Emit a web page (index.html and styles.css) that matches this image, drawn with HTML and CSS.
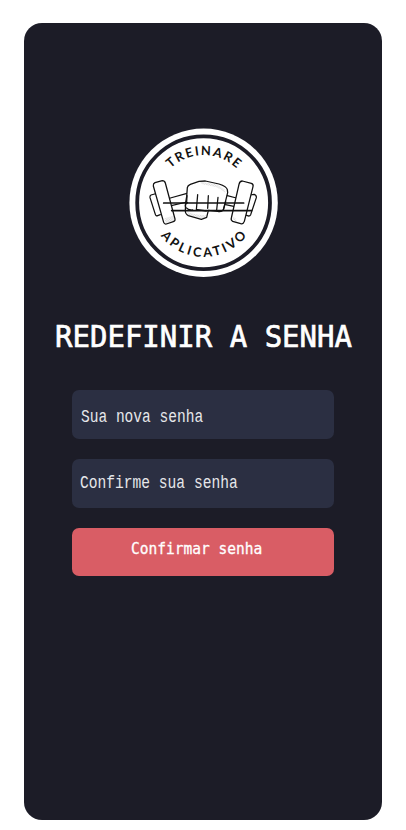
FILE: index.html
```
<!DOCTYPE html>
<html lang="pt-BR">
<head>
<meta charset="utf-8">
<title>Redefinir a senha</title>
<link rel="stylesheet" href="styles.css">
</head>
<body>
<main class="screen">
  <svg class="logo" viewBox="128 127 151 151" role="img" aria-label="Treinare Aplicativo">
    <defs>
      <path id="arc-top" d="M156 202.7A47.6 47.6 0 0 1 251.2 202.7"/>
      <path id="arc-bottom" d="M149.4 202.7A54.2 54.2 0 0 0 257.8 202.7"/>
      <pattern id="dots" width="5" height="5" patternUnits="userSpaceOnUse"><path d="M0 1h2M3 4h2" stroke="#888" stroke-width="1.2"/></pattern>
    </defs>
    <circle cx="203.6" cy="202.7" r="74.2" fill="#fff"/>
    <circle cx="203.6" cy="202.7" r="66.4" fill="none" stroke="#1c1c27" stroke-width="3.8"/>
    <text class="seal" text-anchor="middle" textLength="73"><textPath href="#arc-top" startOffset="50%" textLength="73">TREINARE</textPath></text>
    <text class="seal" text-anchor="middle" textLength="99"><textPath href="#arc-bottom" startOffset="50%" textLength="99">APLICATIVO</textPath></text>
    <g transform="translate(145 175) scale(.33333)" fill="#fff" stroke="#111" stroke-width="3.8" stroke-linejoin="round" stroke-linecap="round">
      <path d="M29 57L18 60Q14 62 15 68L31 118Q33 124 38 122L46 119"/>
      <path d="M30 23L52 17Q59 17 61 24L90 132Q91 138 85 140L64 147Q58 148 56 142L25 33Q24 26 30 23Z"/>
      <path d="M58 130L85 122L89 136L63 145Z" fill="url(#dots)" stroke="none"/>
      <path d="M76 69L126 55M82 91L126 81" fill="none"/>
      <path d="M127 38Q128 31 136 28L162 19L181 18L222 27Q245 34 247 44L248 53L242 77L235 104Q230 112 218 109L190 106L185 127L169 133L130 122Q120 116 121 106L122 82L125 65Z"/>
      <path d="M165 20L214 28L238 43L243 54L215 37L170 27Z" fill="url(#dots)" stroke="none"/>
      <path d="M124 108Q140 119 183 121L182 128L168 131L131 120Z" fill="url(#dots)" stroke="none"/>
      <path d="M128 83Q118 87 122 97Q130 106 143 105M158 59L154 105M190 62L188 100M219 67L215 105M242 80L235 106M126 62L125 82M157 104L184 108" fill="none"/>
      <path d="M247 62L274 69M242 89L266 94" fill="none"/>
      <path d="M315 60L327 58Q335 60 334 68L317 119Q314 125 307 122L296 117"/>
      <path d="M292 18L319 25Q326 27 324 35L298 139Q295 148 287 146L263 139Q257 136 259 129L282 28Q284 18 292 18Z"/>
      <path d="M264 126L271 129L276 140L263 135Z" fill="url(#dots)" stroke="none"/>
      <path d="M56 84H296M80 107H320" stroke-width="5"/>
    </g>
  </svg>
  <h1 class="title"><span>REDEFINIR A SENHA</span></h1>
  <form class="form">
    <div class="field field-new"><span>Sua nova senha</span></div>
    <div class="field field-confirm"><span>Confirme sua senha</span></div>
    <button class="submit" type="button"><span>Confirmar senha</span></button>
  </form>
</main>
</body>
</html>
```
FILE: styles.css
```
* { box-sizing: border-box; }
body { margin: 0; padding: 22.5px 0 0 23.8px; background: #fff; }
.screen {
  width: 358.7px;
  height: 797px;
  border-radius: 18px;
  background: #1c1c27;
  display: flex;
  flex-direction: column;
  align-items: center;
  padding-top: 104.5px;
}
.logo { width: 151px; height: 151px; display: block; margin-left: 1px; flex: none; }
.seal { font: 700 12.8px Lato, sans-serif; fill: #111; }
.title {
  margin: 38px 0 0;
  height: 40px;
  width: 297px;
  font: 400 31px/40px "DejaVu Sans Mono", monospace;
  color: #fff;
  white-space: nowrap;
  -webkit-text-stroke: .7px #fff;
}
.title span, .field span, .submit span { display: inline-block; transform-origin: 0 50%; }
.title span { transform: scaleX(.936); }
.form { width: 262px; margin-top: 33.5px; }
.field {
  height: 48.5px;
  border-radius: 7px;
  background: #2b2f42;
  color: #e6e7ea;
  font-family: "Liberation Mono", monospace;
  white-space: nowrap;
}
.field-new { height: 49.5px; padding: 15px 0 0 8.6px; font-size: 19px; line-height: 24px; }
.field-new span { transform: scaleX(.765); }
.field-confirm { margin-top: 20px; padding: 12px 0 0 7.8px; font-size: 18px; line-height: 24px; }
.field-confirm span { transform: scaleX(.811); }
.submit {
  display: block;
  width: 100%;
  height: 48.5px;
  margin-top: 20px;
  padding: 0 0 6px 59px;
  border: 0;
  border-radius: 7px;
  background: #d95d65;
  color: #fff;
  font: 400 16px/24px "DejaVu Sans Mono", monospace;
  text-align: left;
  white-space: nowrap;
  -webkit-text-stroke: .3px #fff;
}
.submit span { transform: scaleX(.908); }
```
